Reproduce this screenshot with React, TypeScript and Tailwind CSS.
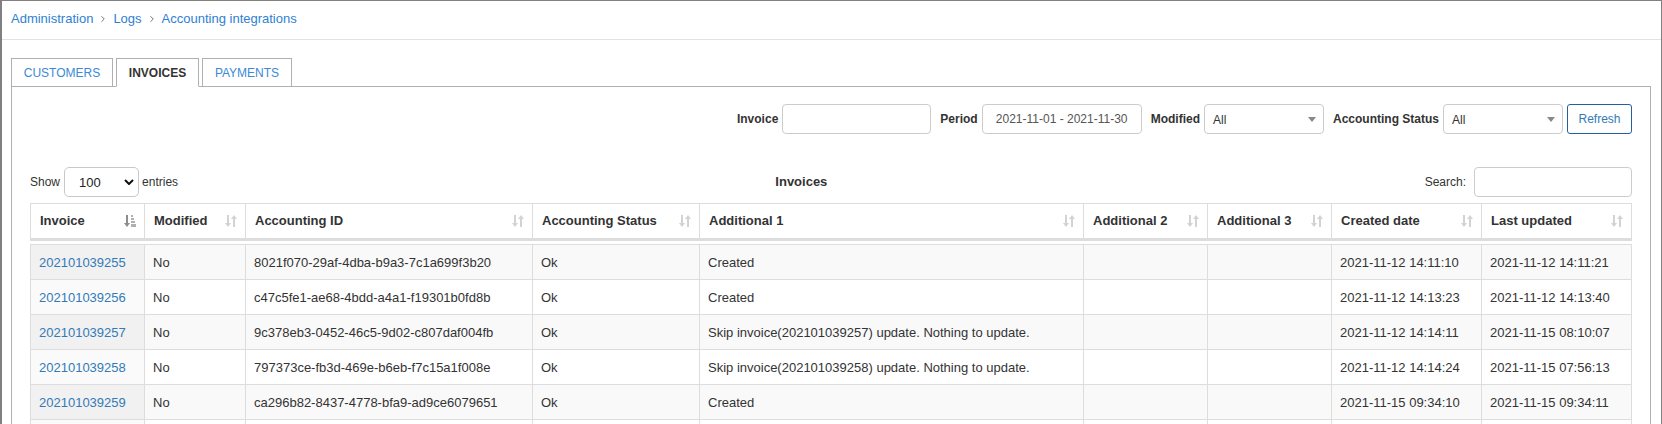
import React from "react";
import { ChevronRight } from "lucide-react";

interface LogRow {
  invoice: string;
  modified: string;
  accountingId: string;
  status: string;
  additional1: string;
  additional2: string;
  additional3: string;
  created: string;
  updated: string;
}

const rows: LogRow[] = [
  {
    invoice: "202101039255",
    modified: "No",
    accountingId: "8021f070-29af-4dba-b9a3-7c1a699f3b20",
    status: "Ok",
    additional1: "Created",
    additional2: "",
    additional3: "",
    created: "2021-11-12 14:11:10",
    updated: "2021-11-12 14:11:21",
  },
  {
    invoice: "202101039256",
    modified: "No",
    accountingId: "c47c5fe1-ae68-4bdd-a4a1-f19301b0fd8b",
    status: "Ok",
    additional1: "Created",
    additional2: "",
    additional3: "",
    created: "2021-11-12 14:13:23",
    updated: "2021-11-12 14:13:40",
  },
  {
    invoice: "202101039257",
    modified: "No",
    accountingId: "9c378eb3-0452-46c5-9d02-c807daf004fb",
    status: "Ok",
    additional1: "Skip invoice(202101039257) update. Nothing to update.",
    additional2: "",
    additional3: "",
    created: "2021-11-12 14:14:11",
    updated: "2021-11-15 08:10:07",
  },
  {
    invoice: "202101039258",
    modified: "No",
    accountingId: "797373ce-fb3d-469e-b6eb-f7c15a1f008e",
    status: "Ok",
    additional1: "Skip invoice(202101039258) update. Nothing to update.",
    additional2: "",
    additional3: "",
    created: "2021-11-12 14:14:24",
    updated: "2021-11-15 07:56:13",
  },
  {
    invoice: "202101039259",
    modified: "No",
    accountingId: "ca296b82-8437-4778-bfa9-ad9ce6079651",
    status: "Ok",
    additional1: "Created",
    additional2: "",
    additional3: "",
    created: "2021-11-15 09:34:10",
    updated: "2021-11-15 09:34:11",
  },
];

const columns = [
  "Invoice",
  "Modified",
  "Accounting ID",
  "Accounting Status",
  "Additional 1",
  "Additional 2",
  "Additional 3",
  "Created date",
  "Last updated",
];

// same template for header and body so the lines stay aligned
const gridCols = "grid grid-cols-[114px_101px_287px_167px_384px_124px_124px_150px_151px]";

function SortBoth() {
  return (
    <svg width="14" height="14" viewBox="0 0 14 14" className="shrink-0">
      <path d="M4 1v9" stroke="#d3d3d3" strokeWidth="2" />
      <path d="M1 9h6l-3 4z" fill="#d3d3d3" />
      <path d="M10 13V4" stroke="#d3d3d3" strokeWidth="2" />
      <path d="M7 5h6l-3-4z" fill="#d3d3d3" />
    </svg>
  );
}

function SortAsc() {
  return (
    <svg width="14" height="14" viewBox="0 0 14 14" className="shrink-0">
      <path d="M4 1v9" stroke="#8c8c8c" strokeWidth="2" />
      <path d="M1 9h6l-3 4z" fill="#8c8c8c" />
      <rect x="8" y="1" width="2" height="2" fill="#b0b0b0" />
      <rect x="8" y="4" width="3" height="2" fill="#b0b0b0" />
      <rect x="8" y="7" width="4" height="2" fill="#b0b0b0" />
      <rect x="8" y="10" width="5" height="3" fill="#b0b0b0" />
    </svg>
  );
}

function Caret() {
  return (
    <svg width="8" height="5" viewBox="0 0 8 5">
      <path d="M0 0h8L4 5z" fill="#888" />
    </svg>
  );
}

function FakeSelect({ value }: { value: string }) {
  return (
    <div className="flex h-[30px] w-[120px] items-center justify-between rounded-[4px] border border-[#ccc] bg-white pl-[8px] pr-[7px] text-[12px] text-[#333]">
      <span className="pt-[2px]">{value}</span>
      <Caret />
    </div>
  );
}

export default function App() {
  const cellBase = "flex h-[34px] items-center border-l border-[#ddd] px-2 pt-px";

  return (
    <div className="h-[424px] overflow-hidden bg-white font-['Liberation_Sans',Arial,sans-serif] text-[12px] text-[#333]">
      <div className="h-[440px] border-l-2 border-r border-t border-[#808080]">
        {/* Breadcrumb */}
        <div className="flex h-[39px] items-center border-b border-[#e2e2e2] pb-[3px] pl-[9px] text-[13px] text-[#2f80d2]">
          <span>Administration</span>
          <ChevronRight size={10} strokeWidth={1.75} className="mx-[5px] text-[#444]" />
          <span>Logs</span>
          <ChevronRight size={10} strokeWidth={1.75} className="mx-[5px] text-[#444]" />
          <span>Accounting integrations</span>
        </div>

        {/* Tabs */}
        <div className="relative z-10 -mb-px mt-[18px] flex gap-[3px] pl-[9px]">
          <div className="flex h-[29px] w-[102px] items-center justify-center border border-[#b0b0b0] bg-white text-[#3a8ad6]">
            CUSTOMERS
          </div>
          <div className="flex h-[29px] w-[83px] items-center justify-center border border-[#b0b0b0] border-b-white bg-white font-bold text-[#333]">
            INVOICES
          </div>
          <div className="flex h-[29px] w-[90px] items-center justify-center border border-[#b0b0b0] bg-white text-[#3a8ad6]">
            PAYMENTS
          </div>
        </div>

        {/* Tab panel */}
        <div className="ml-[9px] mr-[10px] border border-[#b0b0b0] px-[18px] pt-[17px]">
          {/* Filters */}
          <div className="flex items-center justify-end">
            <div className="flex items-center">
              <span className="mr-[4px] font-bold">Invoice</span>
              <input className="h-[30px] w-[149px] rounded-[4px] border border-[#ccc] px-2 outline-none" />
            </div>
            <div className="ml-[9px] flex items-center">
              <span className="mr-[4px] font-bold">Period</span>
              <input
                readOnly
                defaultValue="2021-11-01 - 2021-11-30"
                className="h-[30px] w-[160px] rounded-[4px] border border-[#ccc] text-center text-[12px] text-[#555] outline-none"
              />
            </div>
            <div className="ml-[9px] flex items-center">
              <span className="mr-[4px] font-bold">Modified</span>
              <FakeSelect value="All" />
            </div>
            <div className="ml-[9px] flex items-center">
              <span className="mr-[4px] font-bold">Accounting Status</span>
              <FakeSelect value="All" />
            </div>
            <button className="ml-[4px] h-[30px] w-[65px] rounded-[3px] border border-[#23609c] bg-white text-[12px] text-[#337ab7]">
              Refresh
            </button>
          </div>

          {/* Table toolbar */}
          <div className="mt-[33px] flex h-[30px] items-center">
            <div className="flex items-center">
              <span>Show</span>
              <div className="ml-[4px] flex h-[30px] w-[75px] items-center justify-between rounded-[5px] border border-[#c8c8c8] pl-[14px] pr-[4px] text-[13px] text-[#222]">
                <span className="pt-[2px]">100</span>
                <svg width="10" height="6" viewBox="0 0 10 6">
                  <path d="M1 1l4 4 4-4" stroke="#111" strokeWidth="2" fill="none" />
                </svg>
              </div>
              <span className="ml-[3px]">entries</span>
            </div>
            <div className="flex-1 text-center text-[13px] font-bold">Invoices</div>
            <div className="flex items-center">
              <span>Search:</span>
              <input className="ml-[8px] h-[30px] w-[158px] rounded-[4px] border border-[#ccc] px-2 outline-none" />
            </div>
          </div>

          {/* Table */}
          <div className="mt-[6px] text-[13px]">
            <div className={`${gridCols} border-b-[3px] border-t border-[#ddd]`}>
              {columns.map((col, i) => (
                <div
                  key={col}
                  className={`flex h-[34px] items-center justify-between border-l border-[#ddd] pl-[9px] pr-[7px] font-bold ${
                    i === columns.length - 1 ? "border-r" : ""
                  }`}
                >
                  <span>{col}</span>
                  {i === 0 ? <SortAsc /> : <SortBoth />}
                </div>
              ))}
            </div>
            <div className="h-[3px]" />
            <div className="border-r border-[#ddd]">
              {rows.map((row, idx) => {
                const odd = idx % 2 === 0;
                const rowBg = odd ? "bg-[#f9f9f9]" : "bg-white";
                const sortedBg = odd ? "bg-[#f1f1f1]" : "bg-[#fafafa]";
                return (
                  <div key={row.invoice} className={`${gridCols} border-t border-[#ddd] ${rowBg}`}>
                    <div className={`${cellBase} ${sortedBg} text-[#337ab7]`}>{row.invoice}</div>
                    <div className={cellBase}>{row.modified}</div>
                    <div className={cellBase}>{row.accountingId}</div>
                    <div className={cellBase}>{row.status}</div>
                    <div className={cellBase}>{row.additional1}</div>
                    <div className={cellBase}>{row.additional2}</div>
                    <div className={cellBase}>{row.additional3}</div>
                    <div className={cellBase}>{row.created}</div>
                    <div className={`${cellBase} border-r`}>{row.updated}</div>
                  </div>
                );
              })}
              <div className={`${gridCols} border-t border-[#ddd] bg-white`}>
                {columns.map((col, i) => (
                  <div
                    key={col}
                    className={`${cellBase} ${i === 0 ? "bg-[#fafafa]" : ""} ${
                      i === columns.length - 1 ? "border-r" : ""
                    }`}
                  />
                ))}
              </div>
            </div>
          </div>
        </div>
      </div>
    </div>
  );
}
